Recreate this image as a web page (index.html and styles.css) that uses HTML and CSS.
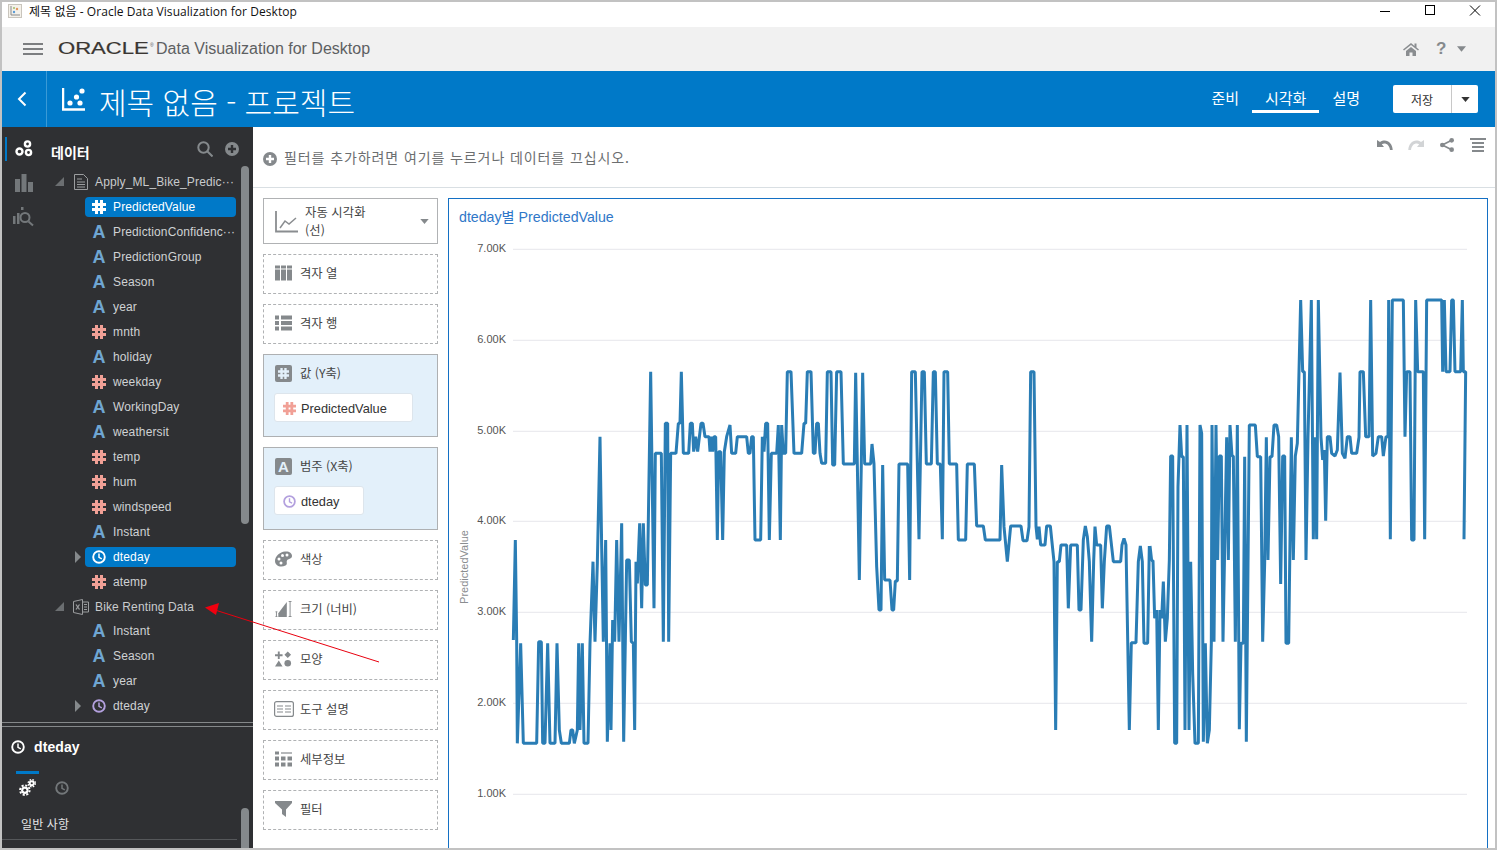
FILE: index.html
```html
<!DOCTYPE html>
<html lang="ko">
<head>
<meta charset="utf-8">
<title>제목 없음 - Oracle Data Visualization for Desktop</title>
<link rel="stylesheet" href="styles.css">
</head>
<body>
<svg class="sprites" aria-hidden="true">
  <symbol id="i-hash" viewBox="0 0 14 14"><path d="M3 0h3v3h2V0h3v3h3v3h-3v2h3v3h-3v3H8v-3H6v3H3v-3H0V8h3V6H0V3h3zM6 6v2h2V6z" fill-rule="evenodd" fill="currentColor"/></symbol>
  <symbol id="i-clock" viewBox="0 0 14 14"><circle cx="7" cy="7" r="5.8" fill="none" stroke="currentColor" stroke-width="1.9"/><path d="M7 3.400V7.400L9.800 8.800" fill="none" stroke="currentColor" stroke-width="1.500"/></symbol>
  <symbol id="i-caret" viewBox="0 0 10 6"><path d="M0 0h10L5 6z" fill="currentColor"/></symbol>
  <symbol id="i-right" viewBox="0 0 6 12"><path d="M0 0l6 6-6 6z" fill="currentColor"/></symbol>
  <symbol id="i-open" viewBox="0 0 9 9"><path d="M9 0v9H0z" fill="currentColor"/></symbol>
  <symbol id="i-plus" viewBox="0 0 14 14"><circle cx="7" cy="7" r="7" fill="currentColor"/><path d="M3 5.800h2.800V3h2.400v2.800H11v2.400H8.200V11H5.800V8.200H3z" fill="#fff"/></symbol>
  <symbol id="i-plus-dark" viewBox="0 0 14 14"><circle cx="7" cy="7" r="7" fill="currentColor"/><path d="M3 5.800h2.800V3h2.400v2.800H11v2.400H8.200V11H5.800V8.200H3z" fill="#2f3033"/></symbol>
</svg>

<div class="window">
  <header class="titlebar">
    <svg class="title-icon" viewBox="0 0 14 14"><rect x=".5" y=".5" width="13" height="13" fill="#f4f1ea" stroke="#c9c5bd"/><path d="M3 2v9h9" fill="none" stroke="#8a8a8a"/><circle cx="6" cy="8" r="1.200" fill="#5a9bd5"/><circle cx="9" cy="5" r="1.200" fill="#e3955f"/><circle cx="6" cy="4" r="1" fill="#9bbf6a"/></svg>
    <span class="title-text">제목 없음 - Oracle Data Visualization for Desktop</span>
    <div class="win-controls">
      <svg viewBox="0 0 12 12"><path d="M1 6.500h10" stroke="#000" fill="none"/></svg>
      <svg viewBox="0 0 12 12"><rect x="1.500" y=".5" width="9" height="9" stroke="#000" fill="none"/></svg>
      <svg viewBox="0 0 12 12"><path d="M1 .5l10 10M11 .5l-10 10" stroke="#000" fill="none"/></svg>
    </div>
  </header>

  <div class="appbar">
    <div class="hamburger"><i></i><i></i><i></i></div>
    <div class="brand"><span class="oracle">ORACLE</span><span class="reg">®</span></div>
    <span class="product">Data Visualization for Desktop</span>
    <div class="appbar-right">
      <svg class="home" viewBox="0 0 16 14"><path d="M8 1L0 7.500l1 1L8 3l7 5.500 1-1-2.500-2V1.500h-2v2.500zM3 9l5-4 5 4v5H9.500v-3.500h-3V14H3z" fill="#8a8d90"/></svg>
      <span class="help">?</span>
      <svg class="caret-help"><use href="#i-caret"/></svg>
    </div>
  </div>

  <div class="projectbar">
    <div class="back"><svg viewBox="0 0 10 16"><path d="M8.500 1.500L2 8l6.500 6.500" fill="none" stroke="#fff" stroke-width="2"/></svg></div>
    <svg class="project-icon" viewBox="0 0 23 23"><path d="M1 0v21.500h22" fill="none" stroke="#fff" stroke-width="2.500"/><circle cx="8" cy="15" r="2.600" fill="#fff"/><circle cx="14.500" cy="9" r="2.600" fill="#fff"/><circle cx="20" cy="3" r="2.600" fill="#fff"/><circle cx="18" cy="15" r="2.600" fill="#fff"/></svg>
    <h1 class="project-title">제목 없음 - 프로젝트</h1>
    <nav class="project-nav">
      <a>준비</a>
      <a class="active">시각화</a>
      <a>설명</a>
    </nav>
    <div class="save"><span class="save-label">저장</span><span class="save-menu"><svg><use href="#i-caret"/></svg></span></div>
  </div>

  <div class="main">
    <aside class="sidebar">
      <section class="data-pane">
        <div class="rail">
          <div class="rail-item active"><svg viewBox="0 0 18 18"><g fill="none" stroke="#fff" stroke-width="2.400"><circle cx="4.500" cy="11.500" r="3"/><circle cx="13.500" cy="12.500" r="2.600"/><circle cx="12.500" cy="4" r="2.600"/></g></svg></div>
          <div class="rail-item"><svg viewBox="0 0 18 18"><path d="M0 5h5v13H0zM6.500 0h5v18h-5zM13 8h5v10h-5z" fill="#73777a"/></svg></div>
          <div class="rail-item"><svg viewBox="0 0 22 20"><path d="M0 9h2.500v8H0zM4 6h2.500v11H4zM8 0h2.500v3H8z" fill="#73777a"/><circle cx="12" cy="10.500" r="4.500" fill="none" stroke="#73777a" stroke-width="2"/><path d="M15.500 14.500l4.500 4" stroke="#73777a" stroke-width="2"/></svg></div>
        </div>
        <div class="tree-col">
          <div class="tree-head">
            <span class="tree-title">데이터</span>
            <svg class="head-search" viewBox="0 0 16 16"><circle cx="6.500" cy="6.500" r="5.200" fill="none" stroke="#85898c" stroke-width="2"/><path d="M10.500 10.500l5 5" stroke="#85898c" stroke-width="2"/></svg>
            <svg class="head-plus"><use href="#i-plus-dark"/></svg>
          </div>
          <div class="dataset">
            <svg class="ds-arrow"><use href="#i-open"/></svg>
            <svg class="ds-icon" viewBox="0 0 14 16"><path d="M.5.500h9l4 4v11H.5z" fill="none" stroke="#9b9d9f"/><path d="M3 5h5M3 8h8M3 10.500h8M3 13h8" stroke="#9b9d9f"/></svg>
            <span>Apply_ML_Bike_Predic···</span>
          </div>
          <div class="field"><i class="expander"></i><div class="pill selected"><svg class="ic"><use href="#i-hash"/></svg>PredictedValue</div></div>
          <div class="field"><i class="expander"></i><div class="pill"><b class="ic-a">A</b>PredictionConfidenc···</div></div>
          <div class="field"><i class="expander"></i><div class="pill"><b class="ic-a">A</b>PredictionGroup</div></div>
          <div class="field"><i class="expander"></i><div class="pill"><b class="ic-a">A</b>Season</div></div>
          <div class="field"><i class="expander"></i><div class="pill"><b class="ic-a">A</b>year</div></div>
          <div class="field"><i class="expander"></i><div class="pill"><svg class="ic num"><use href="#i-hash"/></svg>mnth</div></div>
          <div class="field"><i class="expander"></i><div class="pill"><b class="ic-a">A</b>holiday</div></div>
          <div class="field"><i class="expander"></i><div class="pill"><svg class="ic num"><use href="#i-hash"/></svg>weekday</div></div>
          <div class="field"><i class="expander"></i><div class="pill"><b class="ic-a">A</b>WorkingDay</div></div>
          <div class="field"><i class="expander"></i><div class="pill"><b class="ic-a">A</b>weathersit</div></div>
          <div class="field"><i class="expander"></i><div class="pill"><svg class="ic num"><use href="#i-hash"/></svg>temp</div></div>
          <div class="field"><i class="expander"></i><div class="pill"><svg class="ic num"><use href="#i-hash"/></svg>hum</div></div>
          <div class="field"><i class="expander"></i><div class="pill"><svg class="ic num"><use href="#i-hash"/></svg>windspeed</div></div>
          <div class="field"><i class="expander"></i><div class="pill"><b class="ic-a">A</b>Instant</div></div>
          <div class="field"><svg class="expander"><use href="#i-right"/></svg><div class="pill selected"><svg class="ic"><use href="#i-clock"/></svg>dteday</div></div>
          <div class="field"><i class="expander"></i><div class="pill"><svg class="ic num"><use href="#i-hash"/></svg>atemp</div></div>
          <div class="dataset">
            <svg class="ds-arrow"><use href="#i-open"/></svg>
            <svg class="ds-icon xls" viewBox="0 0 16 16"><path d="M.5 2.500l9-2v15l-9-2z" fill="none" stroke="#9b9d9f"/><path d="M9.500 3h6v10h-6M11 5.500h3M11 8h3M11 10.500h3" fill="none" stroke="#9b9d9f"/><path d="M3 5.500l3.500 5M6.500 5.500L3 10.500" stroke="#9b9d9f" stroke-width="1.300"/></svg>
            <span>Bike Renting Data</span>
          </div>
          <div class="group-two">
            <div class="field"><i class="expander"></i><div class="pill"><b class="ic-a">A</b>Instant</div></div>
            <div class="field"><i class="expander"></i><div class="pill"><b class="ic-a">A</b>Season</div></div>
            <div class="field"><i class="expander"></i><div class="pill"><b class="ic-a">A</b>year</div></div>
            <div class="field"><svg class="expander"><use href="#i-right"/></svg><div class="pill"><svg class="ic date"><use href="#i-clock"/></svg>dteday</div></div>
          </div>
        </div>
        <div class="scrollbar top-scroll"></div>
      </section>

      <section class="props-pane">
        <div class="props-head"><svg class="ic"><use href="#i-clock"/></svg>dteday</div>
        <div class="props-tabs">
          <div class="props-tab active"><svg viewBox="0 0 16 16"><g fill="#fff"><circle cx="5.500" cy="10.500" r="3.500"/><circle cx="12" cy="4" r="2.800"/></g><g fill="none" stroke="#fff"><circle cx="5.500" cy="10.500" r="4.500" stroke-width="1.800" stroke-dasharray="2 1.500"/><circle cx="12" cy="4" r="3.400" stroke-width="1.300" stroke-dasharray="1.500 1.200"/></g><circle cx="5.500" cy="10.500" r="1.400" fill="#2f3033"/><circle cx="12" cy="4" r="1" fill="#2f3033"/></svg></div>
          <div class="props-tab"><svg><use href="#i-clock"/></svg></div>
        </div>
        <div class="props-section">일반 사항</div>
        <div class="scrollbar bottom-scroll"></div>
      </section>
    </aside>

    <div class="content">
      <div class="filterbar">
        <svg class="filter-plus"><use href="#i-plus"/></svg>
        <span class="filter-text">필터를 추가하려면 여기를 누르거나 데이터를 끄십시오.</span>
        <div class="tools">
          <svg viewBox="0 0 16 13"><path d="M0 1.500v7h7L4.800 5.800C8 4 12 5.500 13 11.500h2.700C15.500 4 9 -.5 3 3.500z" fill="#85898c"/></svg>
          <svg viewBox="0 0 16 13"><path d="M16 1.500v7H9l2.200-2.700C8 4 4 5.500 3 11.500H.3C.5 4 7 -.5 13 3.500z" fill="#d2d4d6"/></svg>
          <svg viewBox="0 0 16 15"><path d="M13 2.500L3 7.500l10 5" fill="none" stroke="#85898c" stroke-width="1.800"/><circle cx="13" cy="2.500" r="2.500" fill="#85898c"/><circle cx="3" cy="7.500" r="2.500" fill="#85898c"/><circle cx="13" cy="12.500" r="2.500" fill="#85898c"/></svg>
          <svg viewBox="0 0 16 14"><path d="M0 1h16M2 5h12M2 9h12M2 13h12" stroke="#85898c" stroke-width="2"/></svg>
        </div>
      </div>

      <div class="workspace">
        <div class="shelves">
          <div class="shelf-type">
            <svg class="type-icon" viewBox="0 0 23 23"><path d="M1 1v20.500h22" fill="none" stroke="#8a8d90" stroke-width="1.800"/><path d="M5 18l5-7 4 3 7-6" fill="none" stroke="#8a8d90" stroke-width="1.500"/></svg>
            <span class="type-label">자동 시각화<br>(선)</span>
            <svg class="type-caret"><use href="#i-caret"/></svg>
          </div>
          <div class="shelf">
            <svg viewBox="0 0 17 15"><path d="M0 0h5v3H0zM6 0h5v3H6zM12 0h5v3h-5zM0 4h5v11H0zM6 4h5v11H6zM12 4h5v11h-5z" fill="#85898c"/></svg>
            <span>격자 열</span>
          </div>
          <div class="shelf">
            <svg viewBox="0 0 17 15"><path d="M0 0h4v4H0zM6 0h11v4H6zM0 5.500h4v4H0zM6 5.500h11v4H6zM0 11h4v4H0zM6 11h11v4H6z" fill="#85898c"/></svg>
            <span>격자 행</span>
          </div>
          <div class="shelf-filled">
            <div class="shelf-filled-head">
              <span class="badge"><svg><use href="#i-hash"/></svg></span>
              <span>값 (Y축)</span>
            </div>
            <div class="chip value"><svg class="ic num"><use href="#i-hash"/></svg>PredictedValue</div>
          </div>
          <div class="shelf-filled">
            <div class="shelf-filled-head">
              <span class="badge"><b>A</b></span>
              <span>범주 (X축)</span>
            </div>
            <div class="chip date-chip"><svg class="ic date"><use href="#i-clock"/></svg>dteday</div>
          </div>
          <div class="shelf">
            <svg viewBox="0 0 17 16"><path d="M10 .5C14 0 17 2 17 5c0 3-4 2.500-5 4.500S13 13 10.500 14.500C6 17 0 15 0 10 0 5 5 1 10 .5z" fill="#85898c"/><circle cx="12" cy="4" r="1.500" fill="#fff"/><circle cx="7.500" cy="4.500" r="1.500" fill="#fff"/><circle cx="4" cy="8" r="1.500" fill="#fff"/><circle cx="6" cy="12" r="1.500" fill="#fff"/></svg>
            <span>색상</span>
          </div>
          <div class="shelf">
            <svg viewBox="0 0 17 17"><path d="M3 17v-4L12 1v16z" fill="#85898c"/><path d="M14 .5h3M15.500 .5v16M14 16.500h3M0 11.500h2M1 11.500v5M0 16.500h2" stroke="#85898c" fill="none"/></svg>
            <span>크기 (너비)</span>
          </div>
          <div class="shelf">
            <svg viewBox="0 0 18 16"><path d="M3 0h2v3h3v2H5v3H3V5H0V3h3zM13.500 0L17 3.500 13.500 7 10 3.500zM4 9.500L8 16H0z" fill="#85898c"/><circle cx="13.500" cy="12.500" r="3.500" fill="#85898c"/></svg>
            <span>모양</span>
          </div>
          <div class="shelf shelf-tooltip">
            <svg viewBox="0 0 20 16"><rect x=".6" y=".6" width="18.800" height="14.800" rx="2" fill="none" stroke="#85898c" stroke-width="1.200"/><path d="M3 5h6M11 5h6M3 8h6M11 8h6M3 11h6M11 11h6" stroke="#85898c"/></svg>
            <span>도구 설명</span>
          </div>
          <div class="shelf">
            <svg viewBox="0 0 17 15"><path d="M0 0h4v3H0zM0 5h4v4H0zM6 5h4.500v4H6zM12.500 5H17v4h-4.500zM0 11h4v4H0zM6 11h4.500v4H6zM12.500 11H17v4h-4.500z" fill="#85898c"/><path d="M6 1.500h11" stroke="#85898c" stroke-width="1.200"/></svg>
            <span>세부정보</span>
          </div>
          <div class="shelf">
            <svg viewBox="0 0 17 16"><path d="M0 0h17v2l-6 6.500V16l-4-3V8.500L0 2z" fill="#85898c"/></svg>
            <span>필터</span>
          </div>
        </div>

        <div class="chart-card">
          <div class="chart-title">dteday별 PredictedValue</div>
          <svg class="plot" viewBox="449 225 1038 623">
            <g class="grid">
              <line x1="513" x2="1467" y1="249.300" y2="249.300"/>
              <line x1="513" x2="1467" y1="340.300" y2="340.300"/>
              <line x1="513" x2="1467" y1="431.300" y2="431.300"/>
              <line x1="513" x2="1467" y1="521.300" y2="521.300"/>
              <line x1="513" x2="1467" y1="612.300" y2="612.300"/>
              <line x1="513" x2="1467" y1="703.300" y2="703.300"/>
              <line x1="513" x2="1467" y1="794.300" y2="794.300"/>
            </g>
            <g class="ticks">
              <text x="506" y="252">7.00K</text>
              <text x="506" y="343">6.00K</text>
              <text x="506" y="434">5.00K</text>
              <text x="506" y="524">4.00K</text>
              <text x="506" y="615">3.00K</text>
              <text x="506" y="706">2.00K</text>
              <text x="506" y="797">1.00K</text>
            </g>
            <text class="axis-name" transform="translate(468 567) rotate(-90)">PredictedValue</text>
            <g class="series" transform="translate(500 280) scale(.33333)">
              <polyline points="40,1080 46,780 50,1080 52,1390 62,1090 70,1390 110,1390 116,1085 124,1085 128,1390 135,1390 143,1090 150,1390 165,1390 171,1090 178,1350 184,1390 208,1390 213,1350 218,1350 223,1390 232,1350 236,1090 240,1350 247,1090 252,1390 264,1390 270,1090 279,845 285,1085 292,850 300,470 305,800 310,1085 317,780 322,1385 330,1090 333,1350 338,1020 344,1085 350,780 357,1085 365,730 371,1385 380,840 388,840 394,1085 400,1090 404,1350 408,845 412,910 419,730 425,985 430,730 436,915 442,915 452,275 462,985 466,520 484,520 490,1085 496,430 503,430 506,1085 512,520 528,520 535,430 540,430 544,275 550,520 566,520 571,430 577,430 581,515 587,470 593,515 603,430 609,430 615,470 627,470 630,515 634,470 638,515 642,470 647,470 652,780 656,515 662,515 668,780 673,515 680,470 690,435 695,520 707,520 712,470 740,470 745,520 750,520 755,470 760,470 765,780 782,780 787,470 792,515 797,430 803,430 808,780 814,520 830,520 835,435 841,780 845,435 850,520 857,520 862,275 873,275 882,520 905,520 912,430 917,430 922,275 933,275 940,520 945,520 950,430 955,430 960,520 965,550 977,550 982,275 990,275 993,275 998,555 1004,555 1010,275 1023,275 1030,552 1063,552 1067,278 1072,552 1078,900 1084,550 1088,278 1094,552 1112,552 1116,492 1122,552 1130,860 1137,990 1143,990 1148,555 1154,900 1170,900 1176,990 1181,990 1186,903 1192,903 1197,552 1223,552 1229,900 1235,275 1246,275 1257,778 1266,275 1273,275 1279,552 1294,552 1300,275 1306,275 1312,552 1321,552 1327,778 1332,275 1343,275 1348,552 1370,552 1375,780 1397,780 1402,552 1423,552 1430,738 1450,738 1456,780 1500,780 1505,555 1512,740 1522,845 1532,738 1563,738 1569,782 1581,782 1587,740 1592,275 1602,275 1608,738 1612,778 1617,740 1622,795 1635,795 1640,738 1651,738 1662,845 1667,1350 1672,845 1678,845 1683,795 1700,795 1705,985 1712,795 1732,795 1737,990 1743,990 1750,780 1756,738 1762,770 1768,845 1775,1085 1781,845 1785,740 1790,795 1802,795 1807,985 1813,845 1820,738 1828,738 1840,845 1862,845 1866,795 1872,775 1878,795 1888,1350 1894,1088 1908,1088 1915,845 1921,798 1927,845 1932,1090 1943,1090 1948,798"/>
            </g>
            <g class="series" transform="translate(1150 280) scale(.33333)">
              <polyline points="0,798 5,842 9,842 14,1015 20,990 25,1350 30,990 35,1015 40,905 46,1085 52,1015 58,840 62,528 68,528 74,1390 80,1390 84,620 90,435 95,530 100,530 105,1350 111,435 117,1350 122,845 128,1180 135,1390 145,1390 150,435 155,460 160,1385 166,1090 172,1390 178,1350 184,1090 186,435 192,1085 198,435 203,840 208,528 214,528 219,1085 230,472 235,840 240,435 246,528 250,528 256,1085 262,435 268,1348 273,1090 280,1090 284,530 289,1385 298,435 316,435 322,530 332,530 338,1085 344,850 349,472 354,840 360,530 366,530 372,435 380,435 386,470 392,912 398,528 404,528 408,1090 416,1090 424,472 430,840 436,528 442,490 452,60 458,275 463,275 468,840 474,472 484,60 490,778 495,472 500,778 505,60 513,472 518,540 523,510 527,722 532,470 540,470 545,520 555,528 562,510 570,278 577,520 585,535 592,470 600,470 605,520 620,520 627,472 630,275 640,275 647,470 657,470 662,60 668,528 678,520 685,470 695,470 700,528 708,470 714,470 716,60 721,778 727,60 760,60 765,470 770,275 780,275 785,780 792,780 797,60 803,275 820,275 824,778 830,60 875,60 878,275 883,60 888,275 900,275 905,60 910,60 915,275 932,275 937,60 940,275 947,275 942,778 947,275"/>
            </g>
          </svg>
        </div>
      </div>
    </div>
  </div>
</div>

<svg class="annotation" viewBox="0 0 1497 850" aria-hidden="true">
  <path d="M379 662L215 610" stroke="#e8000f" fill="none"/>
  <path d="M205 607.500L219 603 216 615z" fill="#f0000f"/>
</svg>
</body>
</html>
```

FILE: styles.css
```css
* { box-sizing: border-box; }
html, body { margin: 0; height: 100%; }
body {
  position: relative;
  width: 1497px;
  height: 850px;
  overflow: hidden;
  font-family: "Liberation Sans", "Noto Sans CJK KR", sans-serif;
  font-size: 12px;
  color: #333;
  background: #fff;
}
svg { display: block; flex: none; }
.sprites { position: absolute; width: 0; height: 0; }
.annotation { position: absolute; left: 0; top: 0; width: 1497px; height: 850px; pointer-events: none; }

.window {
  width: 1497px;
  height: 850px;
  border: 2px solid #c2c2c2;
  display: flex;
  flex-direction: column;
  overflow: hidden;
}

/* title bar */
.titlebar { height: 25px; display: flex; align-items: center; padding: 0 0 7px 6px; background: #fff; flex: none; }
.title-icon { width: 14px; height: 14px; }
.title-text { margin-left: 7px; font: 12px "Open Sans", "Noto Sans CJK KR", sans-serif; color: #111; letter-spacing: .06px; }
.win-controls { margin-left: auto; display: flex; gap: 33px; padding-right: 14px; }
.win-controls svg { width: 12px; height: 12px; }

/* app bar */
.appbar { height: 44px; background: #f1f1f1; display: flex; align-items: center; flex: none; padding-left: 21px; }
.hamburger { width: 20px; display: flex; flex-direction: column; gap: 3px; }
.hamburger i { display: block; height: 2px; background: #7c7e80; }
.brand { width: 98px; margin-left: 15px; display: flex; align-items: center; position: relative; height: 14px; }
.oracle { display: inline-block; font-size: 16px; line-height: 14px; color: #3a3632; -webkit-text-stroke: .2px #3a3632; transform: scaleX(1.38); transform-origin: left center; }
.reg { font-size: 5px; color: #555; position: absolute; left: 92px; top: 0; }
.product { font-size: 16px; color: #5d6062; }
.appbar-right { margin-left: auto; display: flex; align-items: center; padding-right: 29px; }
.home { width: 16px; height: 14px; margin-right: 1px; }
.help { margin-left: 16px; font-size: 17px; font-weight: bold; color: #85898c; width: 12px; }
.caret-help { margin-left: 9px; width: 9px; height: 6px; color: #85898c; }

/* project bar */
.projectbar { height: 56px; background: #0079c8; display: flex; align-items: center; flex: none; color: #fff; }
.back { width: 45px; height: 56px; border-right: 1px solid #3a9ad6; display: flex; align-items: center; padding-left: 14px; }
.back svg { width: 12px; height: 16px; }
.project-icon { width: 23px; height: 23px; margin-left: 15px; }
.project-title { margin: 3px 0 0 14px; font: 300 30px "Noto Sans CJK KR", sans-serif; color: #fff; }
.project-nav { margin-left: auto; display: flex; align-items: stretch; height: 56px; }
.project-nav a { display: flex; align-items: center; justify-content: center; height: 42px; padding: 14px 13px 0; font: 15px "Noto Sans CJK KR", sans-serif; border-bottom: 3px solid transparent; }
.project-nav a.active { border-bottom-color: #fff; }
.save { margin: 0 17px 0 20px; width: 85px; height: 28px; background: #fff; border-radius: 2px; display: flex; }
.save-label { width: 59px; display: flex; align-items: center; justify-content: center; font: 12px "Noto Sans CJK KR", sans-serif; color: #333; border-right: 1px solid #c8c8c8; }
.save-menu { flex: 1; display: flex; align-items: center; justify-content: center; }
.save-menu svg { width: 9px; height: 5px; color: #333; }

/* sidebar */
.main { flex: 1; display: flex; min-height: 0; }
.sidebar { width: 251px; flex: none; background: #2f3033; display: flex; flex-direction: column; position: relative; color: #d0d2d4; }
.data-pane { height: 596px; flex: none; display: flex; border-bottom: 1px solid #85888a; overflow: hidden; }
.rail { width: 43px; flex: none; padding: 10px 0 0 3px; display: flex; flex-direction: column; gap: 10px; }
.rail-item { height: 24px; padding-left: 8px; border-left: 2px solid transparent; display: flex; align-items: center; }
.rail-item.active { border-left-color: #0079c8; }
.rail-item svg { width: 18px; height: 18px; }
.rail-item:last-child svg { width: 22px; height: 20px; margin-left: -2px; }
.tree-col { flex: 1; min-width: 0; }
.tree-head { height: 42px; display: flex; align-items: flex-start; padding: 14px 14px 0 6px; }
.tree-title { margin-top: 2px; font: bold 14px/18px "Noto Sans CJK KR", sans-serif; color: #fff; }
.head-search { width: 16px; height: 16px; margin-left: auto; }
.head-plus { width: 14px; height: 14px; margin: 1px 0 0 12px; color: #85898c; }
.dataset { height: 25px; display: flex; align-items: center; padding-left: 10px; color: #c9cbcd; letter-spacing: .13px; }
.ds-arrow { width: 9px; height: 9px; color: #6b6e71; }
.ds-icon { width: 14px; height: 16px; margin: 0 7px 0 10px; }
.ds-icon.xls { width: 16px; margin: 0 6px 0 9px; }
.field { height: 25px; display: flex; align-items: center; padding-left: 30px; }
.group-two { margin-top: -1px; }
.expander { display: block; width: 6px; height: 12px; margin-right: 4px; color: #85898c; }
.pill { width: 151px; height: 20px; border-radius: 4px; display: flex; align-items: center; padding-left: 7px; white-space: nowrap; color: #d0d2d4; letter-spacing: .13px; }
.pill.selected { background: #0079c8; color: #fff; }
.ic { width: 14px; height: 14px; margin-right: 7px; color: #fff; }
.ic.num { color: #f1a096; }
.ic.date { color: #b3a0de; }
.ic-a { width: 14px; margin-right: 7px; text-align: center; font: bold 18px/14px "Liberation Sans", sans-serif; color: #6fa6d2; }
.scrollbar { position: absolute; left: 239px; width: 8px; background: #85898c; border-radius: 4px; }
.top-scroll { top: 39px; height: 358px; }
.bottom-scroll { top: 681px; height: 60px; }

.props-pane { margin-top: 3px; flex: 1; border-top: 1px solid #85888a; }
.props-head { height: 40px; display: flex; align-items: center; padding-left: 9px; font: bold 14px "Liberation Sans", sans-serif; letter-spacing: .1px; color: #fff; }
.props-head .ic { margin-right: 9px; }
.props-tabs { display: flex; margin-left: 14px; height: 34px; margin-top: 4px; }
.props-tab { width: 23px; border-top: 3px solid transparent; display: flex; justify-content: center; padding-top: 5px; margin-right: 13px; }
.props-tab.active { border-top-color: #0079c8; }
.props-tab svg { width: 17px; height: 17px; }
.props-tab:last-child svg { width: 14px; height: 14px; color: #73777a; margin: 2px 0 0 -3px; }
.props-section { margin-top: 5px; height: 30px; width: 235px; padding: 4px 0 0 19px; border-bottom: 1px solid #55575a; font: 12px/20px "Noto Sans CJK KR", sans-serif; letter-spacing: .1px; color: #e4e5e6; }

/* content */
.content { flex: 1; min-width: 0; display: flex; flex-direction: column; }
.filterbar { height: 61px; flex: none; border-bottom: 1px solid #d9dfe3; display: flex; padding: 25px 9px 0 10px; position: relative; }
.filter-plus { width: 14px; height: 14px; color: #85898c; }
.filter-text { margin: -2px 0 0 7px; font: 14px/14px "Noto Sans CJK KR", sans-serif; color: #6c6e70; letter-spacing: .9px; }
.tools { margin-left: auto; display: flex; gap: 15px; margin-top: -14px; }
.tools svg { width: 16px; height: 14px; }
.workspace { flex: 1; display: flex; padding: 10px 7px 0 10px; min-height: 0; }
.shelves { width: 175px; flex: none; display: flex; flex-direction: column; gap: 10px; }
.shelf-type { height: 46px; flex: none; border: 1px solid #b0b2b4; display: flex; align-items: center; padding-left: 11px; position: relative; }
.type-icon { width: 23px; height: 23px; }
.type-label { margin-left: 7px; letter-spacing: .1px; font: 12.300px/18px "Noto Sans CJK KR", sans-serif; color: #444; }
.type-caret { width: 9px; height: 5px; margin-left: auto; margin-right: 8px; color: #85898c; }
.shelf { height: 40px; flex: none; border: 1px dashed #b0b2b4; display: flex; align-items: center; padding: 0 0 3px 11px; font: 12.300px "Noto Sans CJK KR", sans-serif; color: #444; }
.shelf svg { width: 17px; height: 16px; margin-right: 8px; }
.shelf-tooltip svg { width: 20px; margin: 0 6px 0 -1px; }
.shelf-filled { height: 83px; flex: none; border: 1px solid #aeb0b2; background: #e3f0fa; padding: 9px 10px 0 11px; font: 12.300px "Noto Sans CJK KR", sans-serif; color: #444; }
.shelf-filled-head { display: flex; align-items: center; height: 18px; }
.badge { width: 17px; height: 17px; margin-right: 8px; background: #85898c; border-radius: 2px; display: flex; align-items: center; justify-content: center; color: #e3f0fa; }
.badge svg { width: 11px; height: 11px; }
.badge b { font: bold 15px/15px "Liberation Sans", sans-serif; }
.chip { margin: 11px 0 0 -1px; height: 29px; padding: 1px 0 0 8px; background: #fff; border: 1px solid #dde5ec; border-radius: 3px; display: flex; align-items: center; font: 12.800px "Liberation Sans", sans-serif; color: #333; }
.chip .ic { margin-right: 5px; width: 13px; height: 13px; }
.chip.value { width: 139px; }
.chip.date-chip { width: 90px; }

/* chart */
.chart-card { flex: 1; min-width: 0; margin-left: 10px; border: 1px solid #1470c4; border-bottom: 0; }
.chart-title { height: 26px; padding: 10px 0 0 10px; font-size: 14.200px; line-height: 16px; color: #2f77c8; white-space: nowrap; }
.plot { width: 1038px; height: 623px; }
.grid line { stroke: #e6e7ec; stroke-width: 1; }
.ticks text { font-size: 11px; fill: #555; text-anchor: end; font-family: "Liberation Sans", sans-serif; }
.axis-name { font-size: 11px; fill: #8a8d90; text-anchor: middle; font-family: "Liberation Sans", sans-serif; }
.series polyline { fill: none; stroke: #2a7db5; stroke-width: 3px; stroke-linejoin: bevel; vector-effect: non-scaling-stroke; }
```
